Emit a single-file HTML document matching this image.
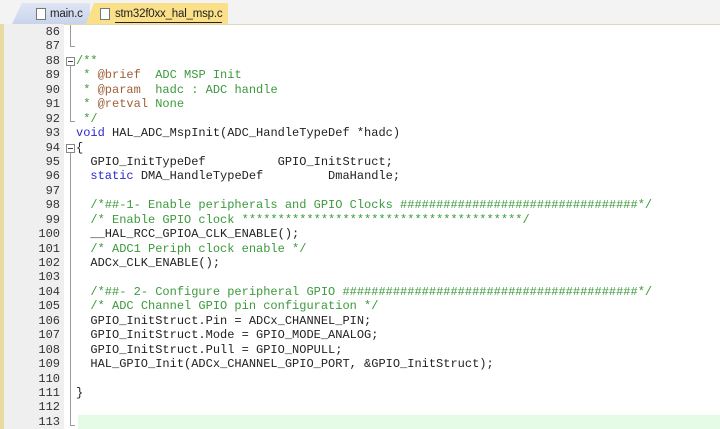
<!DOCTYPE html>
<html><head><style>
body{margin:0;width:720px;height:429px;overflow:hidden;background:#fff;font-family:"Liberation Mono",monospace;}
.tabbar{position:absolute;left:0;top:0;width:720px;height:24px;background:#f3f3f3;border-bottom:1px solid #e0d8b0;}
.tab{position:absolute;top:3px;height:21px;font:11.5px "Liberation Sans",sans-serif;letter-spacing:-0.2px;line-height:21px;color:#222;white-space:nowrap;}
.frame{position:absolute;left:0;top:24px;width:4px;height:405px;background:#e9d9a2;}
.gut{position:absolute;left:4px;top:24px;width:60px;height:405px;background:#efefef;}
.code{position:absolute;left:0;top:25px;font-size:12px;line-height:14.44px;color:#222;}
.ln{position:absolute;left:0;top:0;width:60px;text-align:right;color:#333;white-space:pre;}
.tx{position:absolute;left:76px;top:0;white-space:pre;}
.c{color:#3c9a3c}.k{color:#2a2ad0}.t{color:#a0603a}
.hl{position:absolute;left:78px;top:415px;width:642px;height:14px;background:#e6fbe6;}
.fold{position:absolute;left:70px;width:1px;background:#999;}
.hk{position:absolute;left:70px;width:5px;height:1px;background:#999}
.box{position:absolute;left:66px;width:7px;height:7px;border:1px solid #888;background:#fff;}
.box:after{content:"";position:absolute;left:1px;top:3px;width:5px;height:1px;background:#444;}
</style></head><body>
<div class="tabbar">
<div class="tab" style="left:12px;width:78px;background:linear-gradient(#dfe6f4,#c9d3ea);clip-path:polygon(10px 0,100% 0,100% 100%,0 100%)"><span style="position:absolute;left:24px;top:5px;width:8px;height:10px;border:1px solid #777;background:#fff"></span><span style="position:absolute;left:38px;top:1px">main.c</span></div>
<div class="tab" style="left:86px;width:142px;background:#fbe08a;clip-path:polygon(8px 0,100% 0,100% 100%,0 100%)"><span style="position:absolute;left:14px;top:5px;width:8px;height:10px;border:1px solid #777;background:#fff"></span><span style="position:absolute;left:29px;top:3px;border-bottom:1px solid #222;line-height:16px">stm32f0xx_hal_msp.c</span></div>
</div>
<div class="frame"></div><div class="gut"></div>
<div class="hl"></div>
<div class="fold" style="top:25px;height:22px"></div><div class="hk" style="top:46px"></div>
<div class="fold" style="top:66px;height:56px"></div><div class="hk" style="top:121px"></div>
<div class="fold" style="top:153px;height:273px"></div><div class="hk" style="top:425px"></div>
<div class="box" style="top:57px"></div>
<div class="box" style="top:144px"></div>
<div class="code"><div class="ln">86
87
88
89
90
91
92
93
94
95
96
97
98
99
100
101
102
103
104
105
106
107
108
109
110
111
112
113</div><div class="tx"> 
 
<span class="c">/**</span>
<span class="c"> * </span><span class="t">@brief</span><span class="c">  ADC MSP Init</span>
<span class="c"> * </span><span class="t">@param</span><span class="c">  hadc : ADC handle</span>
<span class="c"> * </span><span class="t">@retval</span><span class="c"> None</span>
<span class="c"> */</span>
<span class="k">void</span> HAL_ADC_MspInit(ADC_HandleTypeDef *hadc)
{
  GPIO_InitTypeDef          GPIO_InitStruct;
  <span class="k">static</span> DMA_HandleTypeDef         DmaHandle;
 
  <span class="c">/*##-1- Enable peripherals and GPIO Clocks #################################*/</span>
  <span class="c">/* Enable GPIO clock ***************************************/</span>
  __HAL_RCC_GPIOA_CLK_ENABLE();
  <span class="c">/* ADC1 Periph clock enable */</span>
  ADCx_CLK_ENABLE();
 
  <span class="c">/*##- 2- Configure peripheral GPIO #########################################*/</span>
  <span class="c">/* ADC Channel GPIO pin configuration */</span>
  GPIO_InitStruct.Pin = ADCx_CHANNEL_PIN;
  GPIO_InitStruct.Mode = GPIO_MODE_ANALOG;
  GPIO_InitStruct.Pull = GPIO_NOPULL;
  HAL_GPIO_Init(ADCx_CHANNEL_GPIO_PORT, &amp;GPIO_InitStruct);
 
}</div></div>
</body></html>
